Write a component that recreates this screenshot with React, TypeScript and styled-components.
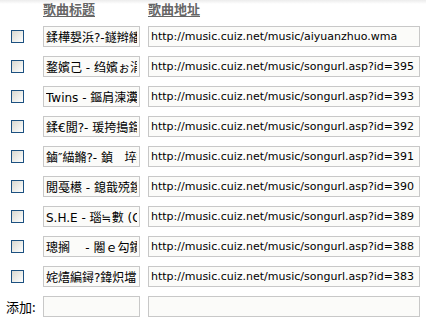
import React from "react";
import styled, { createGlobalStyle } from "styled-components";

const GlobalStyle = createGlobalStyle`
  html, body {
    margin: 0;
    padding: 0;
    background: #ffffff;
  }
  body {
    font-family: "DejaVu Sans", "Noto Sans CJK SC", sans-serif;
  }
`;

const songs = [
    { title: "鍒樺嫢浜?-鐩辫繙缁", url: "http://music.cuiz.net/music/aiyuanzhuo.wma" },
    { title: "鍪嬪己 - 绉嬪ぉ涓滑", url: "http://music.cuiz.net/music/songurl.asp?id=395" },
    { title: "Twins - 鏂肩湅瀵?", url: "http://music.cuiz.net/music/songurl.asp?id=393" },
    { title: "鍒€閲?- 瑗挎搗鍧鎼", url: "http://music.cuiz.net/music/songurl.asp?id=392" },
    { title: "鏀″緢鏅?- 鍞   埣鍦", url: "http://music.cuiz.net/music/songurl.asp?id=391" },
    { title: "閲戞櫒 - 鎴戠殑鍐鐨", url: "http://music.cuiz.net/music/songurl.asp?id=390" },
    { title: "S.H.E - 瑙≒數 (C", url: "http://music.cuiz.net/music/songurl.asp?id=389" },
    { title: "璁搁    - 闂ｅ勾鐨", url: "http://music.cuiz.net/music/songurl.asp?id=388" },
    { title: "姹熺編鐞?鍏炽壋", url: "http://music.cuiz.net/music/songurl.asp?id=383" },
];

const Page = styled.div`
    position: relative;
    width: 426px;
    height: 331px;
    overflow: hidden;
    background: linear-gradient(#ececec 0px, #ffffff 4px);
`;

const Table = styled.div`
    display: grid;
    grid-template-columns: 35px 97px 272px;
    grid-template-rows: 16px;
    column-gap: 8px;
    row-gap: 9px;
    grid-auto-rows: 21px;
    padding-top: 1px;
`;

const Head = styled.div`
    grid-column: ${({ $col }: { $col: number }) => $col};
    font-family: "Noto Sans CJK SC", sans-serif;
    font-weight: 700;
    font-size: 13px;
    line-height: 16px;
    color: #666666;
    text-decoration: underline;
    text-underline-offset: 2px;
`;

const CheckCell = styled.div`
    display: flex;
    align-items: center;
    padding-left: 11px;
`;

const Check = styled.span`
    display: block;
    width: 11px;
    height: 11px;
    border: 1px solid #1c5180;
    background: linear-gradient(135deg, #d8d8d0 0%, #f0f0ec 60%, #ffffff 100%);
`;

const Label = styled.div`
    display: flex;
    align-items: center;
    padding-left: 6px;
    font-family: "Noto Sans CJK SC", sans-serif;
    font-size: 13px;
    color: #000000;
    white-space: nowrap;
`;

const Field = styled.input<{ $size?: number }>`
    box-sizing: border-box;
    width: 100%;
    height: 21px;
    margin: 0;
    padding: 0 2px;
    border: 1px solid #c8c8c8;
    background: #fbfbf9;
    font-family: "DejaVu Sans", "Noto Sans CJK SC", sans-serif;
    font-size: ${({ $size }) => $size ?? 11}px;
    color: #000000;
    outline: none;
`;

export default function App() {
    return (
        <>
            <GlobalStyle />
            <Page>
                <Table>
                    <Head $col={2}>歌曲标题</Head>
                    <Head $col={3}>歌曲地址</Head>
                    {songs.map((s, i) => (
                        <React.Fragment key={i}>
                            <CheckCell>
                                <Check />
                            </CheckCell>
                            <Field $size={12} defaultValue={s.title} />
                            <Field defaultValue={s.url} />
                        </React.Fragment>
                    ))}
                    <Label>添加:</Label>
                    <Field defaultValue="" />
                    <Field defaultValue="" />
                </Table>
            </Page>
        </>
    );
}
